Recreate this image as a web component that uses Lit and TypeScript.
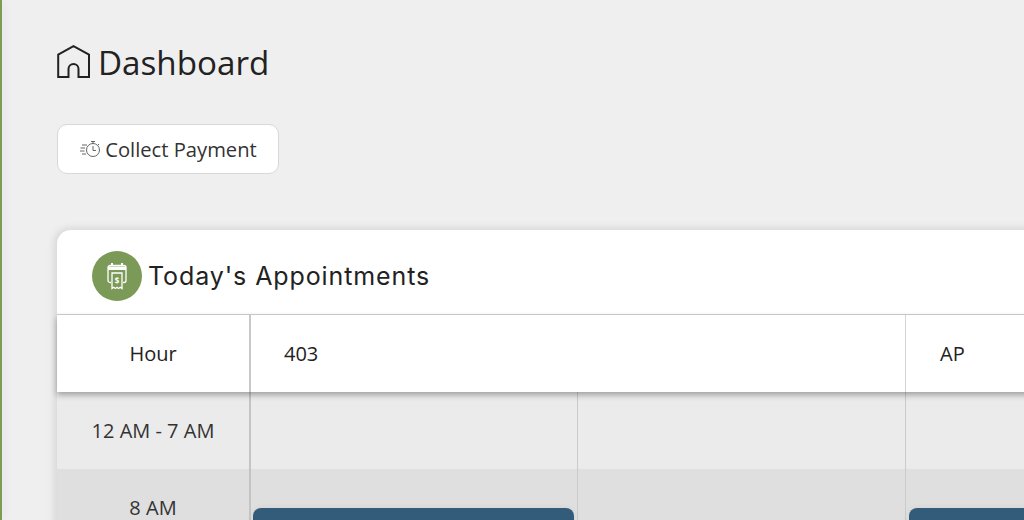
import { LitElement, html, css } from "lit";
import { customElement } from "lit/decorators.js";

@customElement("app-root")
export class AppRoot extends LitElement {
  static styles = css`
    :host { display: block; width: 1024px; height: 520px; overflow: hidden; background: #efefef; font-family: "Open Sans", sans-serif; color: #222; }
    .layout { display: flex; height: 520px; }
    .rail { width: 2px; flex: none; background: #7b9f52; box-shadow: 2px 0 8px rgba(0,0,0,.1); }
    .main { flex: none; width: 1300px; padding: 40px 0 0 55px; box-sizing: border-box; display: flex; flex-direction: column; }
    .main > * { flex: none; }
    .title { display: flex; align-items: center; gap: 7px; height: 46px; margin: 0; font-size: 33.2px; font-weight: 400; line-height: 46px; color: #222; }
    .title svg { margin-top: -2px; }
    .pay { margin-top: 38px; width: 222px; height: 50px; box-sizing: border-box; display: flex; align-items: center; justify-content: center; gap: 4px; background: #fff; border: 1px solid #d8d8d8; border-radius: 10px; font: 400 20.2px "Open Sans", sans-serif; color: #333; padding: 0; }
    .card { margin-top: 56px; width: 1200px; border-radius: 14px 0 0 0; background: #fff; box-shadow: -2px -1px 8px rgba(0,0,0,.12); }
    .head { height: 85px; display: flex; align-items: center; gap: 6px; padding: 8px 0 0 35px; box-sizing: border-box; border-bottom: 1px solid #cfcfcf; }
    .badge { width: 50px; height: 50px; border-radius: 50%; background: #7b9a57; display: flex; align-items: center; justify-content: center; }
    .head h2 { margin: 0; font: 400 25px Inter, sans-serif; color: #222; letter-spacing: .9px; }
    .thead { position: relative; z-index: 1; display: grid; grid-template-columns: 194px 655px 344px; height: 77px; background: #fff; box-shadow: 0 3px 6px rgba(0,0,0,.32); font-size: 20px; color: #222; }
    .thead > div { display: flex; align-items: center; box-sizing: border-box; }
    .thead .hour { justify-content: center; border-right: 2px solid #c8c8c8; }
    .thead .col { padding-left: 33px; border-right: 1px solid #d4d4d4; }
    .thead .col + .col { padding-left: 34px; }
    .row { display: grid; grid-template-columns: 194px 327px 328px 328px 23px; height: 77px; font-size: 20px; color: #333; }
    .row.a { background: #ebebeb; }
    .row.b { background: #dfdfdf; }
    .row > div { box-sizing: border-box; border-right: 1px solid #cacaca; }
    .row .hour { display: flex; align-items: center; justify-content: center; border-right: 2px solid #c4c4c4; }
    .row.b .hour { align-items: flex-start; padding-top: 25px; line-height: 27px; }
    .cell { padding: 39px 3px 0 2px; }
    .cell + div + .cell { padding-left: 3px; }
    .appt { height: 40px; background: #335b7a; border-radius: 8px; box-shadow: 0 0 6px rgba(0,0,0,.06); }
    .dollar { font: 700 8px "Open Sans", sans-serif; fill: #fff; }
  `;

  render() {
    return html`
      <div class="layout">
        <div class="rail"></div>
        <div class="main">
          <h1 class="title">
            <svg width="34" height="34" viewBox="0 0 34 34" fill="none" stroke="#222" stroke-width="2">
              <path d="M1.2 32V9.500L16.500 1.200L32 9.500V32H21.500V24a5 5 0 0 0-10 0V32Z" stroke-linejoin="miter"/>
            </svg>
            Dashboard
          </h1>
          <button class="pay">
            <svg width="22" height="20" viewBox="0 0 22 20" fill="none" stroke="#555" stroke-width=".9">
              <circle cx="14" cy="11" r="6.500"/>
              <path d="M14 7v4.500h3M12 2.500h4M14 2.500v2M19 5l1 1" />
              <path d="M3 6h5M1.500 9h4.500M1 12h4.500M3 15h4" stroke-width=".9"/>
            </svg>
            Collect Payment
          </button>
          <section class="card">
            <div class="head">
              <div class="badge">
                <svg width="20" height="27" viewBox="0 0 20 27" fill="none" stroke="#fff" stroke-width="1.300">
                  <path d="M4 19.500H3a2 2 0 0 1-2-2V4.500a2 2 0 0 1 2-2h14a2 2 0 0 1 2 2v13a2 2 0 0 1-2 2h-1"/>
                  <path d="M1 3.500h18V7H1Z" fill="#fff" stroke="none"/>
                  <path d="M5 0v3M15 0v3" stroke-width="2"/>
                  <path d="M5 10h10v15.500l-1.700-1.200-1.700 1.200-1.600-1.200-1.600 1.200-1.700-1.200L5 25.500Z" fill="#7b9a57"/>
                  <text class="dollar" x="10" y="20.500" text-anchor="middle" stroke="none">$</text>
                </svg>
              </div>
              <h2>Today's Appointments</h2>
            </div>
            <div class="thead">
              <div class="hour">Hour</div>
              <div class="col">403</div>
              <div class="col">AP</div>
            </div>
            <div class="row a">
              <div class="hour">12 AM - 7 AM</div><div></div><div></div><div></div><div></div>
            </div>
            <div class="row b">
              <div class="hour">8 AM</div>
              <div class="cell"><div class="appt"></div></div>
              <div></div>
              <div class="cell"><div class="appt"></div></div>
              <div></div>
            </div>
          </section>
        </div>
      </div>
    `;
  }
}
